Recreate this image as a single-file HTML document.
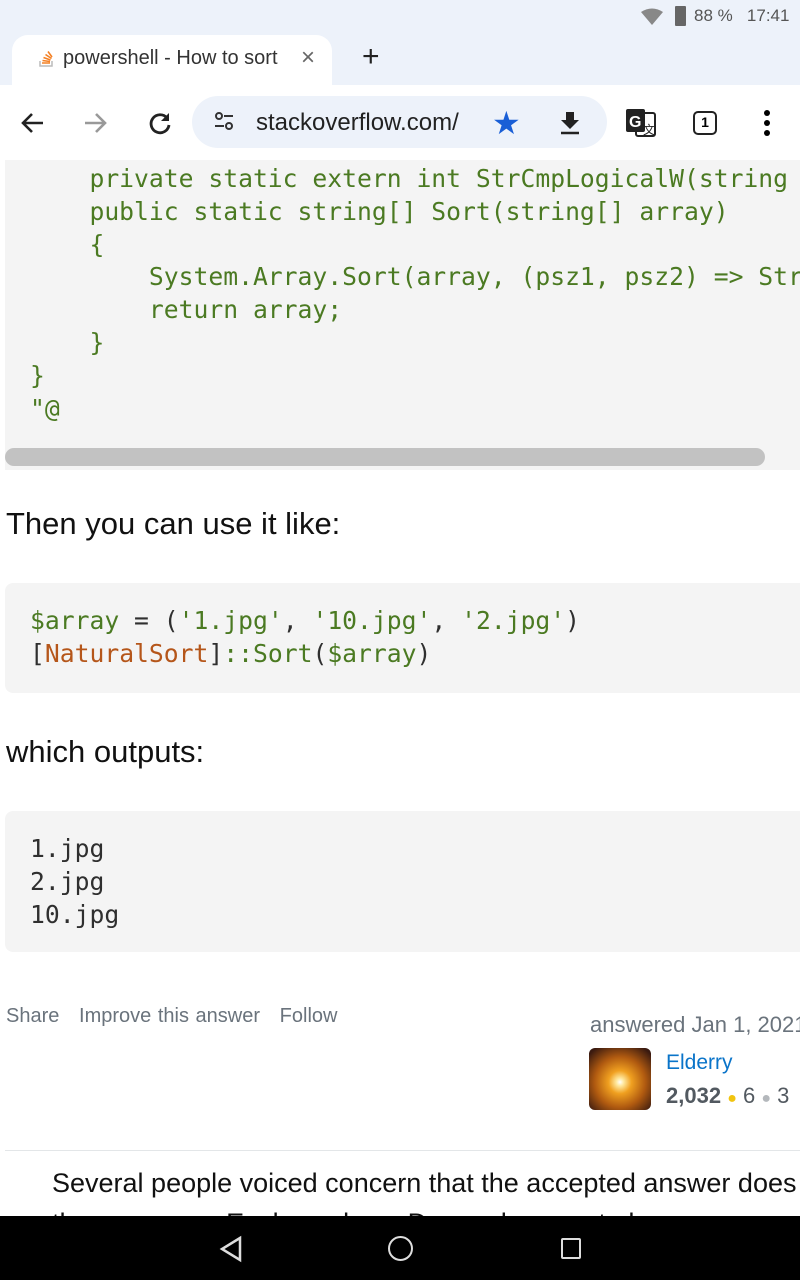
<!DOCTYPE html>
<html><head><meta charset="utf-8"><style>
*{margin:0;padding:0;box-sizing:border-box}
body{width:800px;height:1280px;overflow:hidden;background:#fff;font-family:"Liberation Sans",Roboto,sans-serif;position:relative}
.abs{position:absolute}
.code{font-family:"DejaVu Sans Mono","Liberation Mono",monospace;font-size:24.7px;line-height:32.8px;white-space:pre;color:#4b7a22}
.k{color:#2f2f2f}.o{color:#b5561a}
</style></head><body>
<div class="abs" style="left:0;top:0;width:800px;height:85px;background:#edf2fa"></div>
<div class="abs" style="left:640px;top:8px;width:24px;height:18px;"><svg width="24" height="18" viewBox="0 0 24 18"><path d="M1 4 Q12 -3 23 4 L12 17Z" fill="#888"/></svg></div>
<div class="abs" style="left:675px;top:6px;width:11px;height:20px;background:#666;border-radius:1px"></div>
<div class="abs" style="left:694px;top:6px;font-size:17px;color:#555">88 %&nbsp;&nbsp; 17:41</div>
<div class="abs" style="left:12px;top:35px;width:320px;height:52px;background:#fff;border-radius:16px 16px 0 0"></div>
<div class="abs" style="left:38px;top:49px;width:16px;height:18px"><svg width="16" height="18"><path d="M2 12v5h12v-5" fill="none" stroke="#bcbbbb" stroke-width="1.5"/><path d="M4 14h8M4.5 11.5l7.5 1M5.5 8.5l7 2.5M7.5 5.5l6 4M10 2.5l4 5.5" stroke="#f48024" stroke-width="1.6"/></svg></div>
<div class="abs" style="left:63px;top:47px;font-size:20px;color:#333">powershell - How to sort</div>
<div class="abs" style="left:301px;top:44px;font-size:24px;color:#666">×</div>
<div class="abs" style="left:362px;top:40px;font-size:30px;color:#222">+</div>
<div class="abs" style="left:20px;top:111px"><svg width="24" height="24"><path d="M23 12H3M12 3l-9 9 9 9" fill="none" stroke="#222" stroke-width="2.6"/></svg></div>
<div class="abs" style="left:84px;top:111px"><svg width="24" height="24"><path d="M1 12h20M12 3l9 9-9 9" fill="none" stroke="#999" stroke-width="2.6"/></svg></div>
<div class="abs" style="left:148px;top:111px"><svg width="24" height="24"><path d="M19 7A9 9 0 1 0 21 14" fill="none" stroke="#222" stroke-width="2.8"/><path d="M21 2v8h-8z" fill="#222"/></svg></div>
<div class="abs" style="left:192px;top:96px;width:415px;height:52px;background:#edf2fa;border-radius:26px"></div>
<div class="abs" style="left:214px;top:111px;width:20px;height:22px"><svg width="20" height="22"><circle cx="5" cy="5" r="3" fill="none" stroke="#333" stroke-width="2"/><path d="M10 5h9M1 15h9" stroke="#333" stroke-width="2"/><circle cx="15" cy="15" r="3" fill="none" stroke="#333" stroke-width="2"/></svg></div>
<div class="abs" style="left:256px;top:109px;font-size:24px;color:#222">stackoverflow.com/</div>
<div class="abs" style="left:492px;top:104px;font-size:32px;color:#1a5fd6">★</div>
<div class="abs" style="left:558px;top:110px;width:24px;height:26px"><svg width="24" height="26"><path d="M8 2h8v8h5L12 19 3 10h5z" fill="#222"/><path d="M3 23h18" stroke="#222" stroke-width="2.5"/></svg></div>
<div class="abs" style="left:625px;top:108px;width:32px;height:30px"><svg width="32" height="30"><rect x="11" y="5" width="19" height="23" rx="2" fill="#fff" stroke="#222" stroke-width="2"/><rect x="1" y="1" width="19" height="23" rx="2" fill="#222"/><text x="4" y="19" font-size="16" font-weight="bold" fill="#fff" font-family="Liberation Sans">G</text><text x="18" y="26" font-size="12" fill="#222" font-family="Liberation Sans">文</text></svg></div>
<div class="abs" style="left:693px;top:111px;width:24px;height:24px;border:2.5px solid #222;border-radius:5px;font-size:14px;text-align:center;line-height:19px;font-weight:bold">1</div>
<div class="abs" style="left:764px;top:110px;width:6px;height:26px"><svg width="6" height="26"><circle cx="3" cy="3" r="3"/><circle cx="3" cy="13" r="3"/><circle cx="3" cy="23" r="3"/></svg></div>

<div class="abs" style="left:5px;top:160px;width:795px;height:310px;background:#f4f4f4"></div>
<div class="abs code" style="left:30px;top:163px">    private static extern int StrCmpLogicalW(string
    public static string[] Sort(string[] array)
    {
        System.Array.Sort(array, (psz1, psz2) =&gt; Str
        return array;
    }
}
"@</div>
<div class="abs" style="left:5px;top:448px;width:760px;height:18px;background:#c2c2c2;border-radius:9px"></div>

<div class="abs" style="left:6px;top:506px;font-size:31px;color:#111">Then you can use it like:</div>
<div class="abs" style="left:5px;top:583px;width:795px;height:110px;background:#f4f4f4;border-radius:8px 0 0 8px"></div>
<div class="abs code" style="left:30px;top:605px">$array <span class="k">=</span> <span class="k">(</span>'1.jpg'<span class="k">,</span> '10.jpg'<span class="k">,</span> '2.jpg'<span class="k">)</span>
<span class="k">[</span><span class="o">NaturalSort</span><span class="k">]</span>::Sort<span class="k">(</span>$array<span class="k">)</span></div>

<div class="abs" style="left:6px;top:734px;font-size:31px;color:#111">which outputs:</div>
<div class="abs" style="left:5px;top:811px;width:795px;height:141px;background:#f4f4f4;border-radius:8px 0 0 8px"></div>
<div class="abs code" style="left:30px;top:833px;color:#2f2f2f">1.jpg
2.jpg
10.jpg</div>

<div class="abs" style="left:6px;top:1005px;font-size:20px;color:#6a737c;word-spacing:1px">Share&nbsp;&nbsp; Improve this answer&nbsp;&nbsp; Follow</div>
<div class="abs" style="left:590px;top:1012px;font-size:22px;color:#6a737c;white-space:nowrap">answered Jan 1, 2021</div>
<div class="abs" style="left:589px;top:1048px;width:62px;height:62px;border-radius:6px;background:radial-gradient(circle at 50% 55%,#fff 0,#ffe9a0 8%,#f0a020 25%,#b05a10 55%,#3a1a10 90%)"></div>
<div class="abs" style="left:666px;top:1051px;font-size:21px;color:#0a74c9">Elderry</div>
<div class="abs" style="left:666px;top:1083px;font-size:22px;color:#525960;white-space:nowrap"><b>2,032</b> <span style="color:#f1c40f;font-size:16px">●</span> 6 <span style="color:#b4b8bc;font-size:16px">●</span> 3</div>
<div class="abs" style="left:5px;top:1150px;width:795px;height:1px;background:#e3e6e8"></div>
<div class="abs" style="left:52px;top:1163px;font-size:27px;color:#111;white-space:nowrap;line-height:40px">Several people voiced concern that the accepted answer does<br>the same way Explorer does. Do you happen to have an example</div>
<div class="abs" style="left:0;top:1216px;width:800px;height:64px;background:#000"></div>
<div class="abs" style="left:218px;top:1235px"><svg width="26" height="28"><path d="M22 3L4 14 22 25Z" fill="none" stroke="#ddd" stroke-width="2.5"/></svg></div>
<div class="abs" style="left:388px;top:1236px;width:25px;height:25px;border:2.5px solid #ddd;border-radius:50%"></div>
<div class="abs" style="left:561px;top:1238px;width:20px;height:21px;border:2.5px solid #ddd;border-radius:2px"></div>
</body></html>
